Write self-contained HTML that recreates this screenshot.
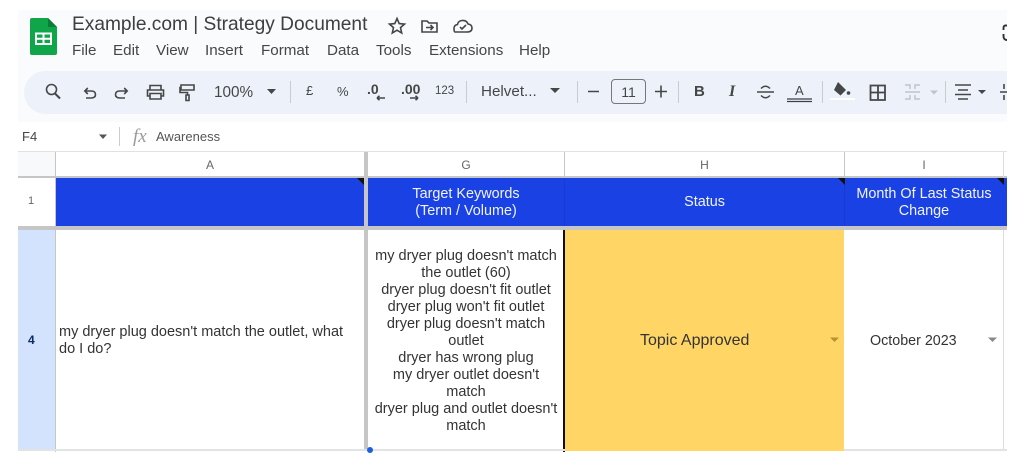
<!DOCTYPE html>
<html><head><meta charset="utf-8"><style>
html,body{margin:0;padding:0;background:#fff}
body{width:1024px;height:465px;position:relative;overflow:hidden;font-family:"Liberation Sans",sans-serif;color:#3c4043;filter:blur(.3px)}
div,svg{position:absolute}
.t{white-space:nowrap;line-height:1}
.c{text-align:center;white-space:nowrap}
.m{font-size:15.2px;top:43px;color:#444746}
.tb{font-size:13px;color:#444746}
.sep{width:1px;height:22px;top:81px;background:#c7ccd3}
.i{fill:none;stroke:#444746;stroke-width:1.6}
.hl{font-size:14.4px;line-height:17px;color:#f0f4ff}
.g{font-size:14.5px;line-height:17px;color:#333}
.ch{font-size:12px;color:#666;top:158px}
.tri{width:0;height:0;border-top:7px solid #111;border-left:7px solid transparent;top:178px}
</style></head><body>
<div style="left:18px;top:10px;width:989px;height:119px;background:#f9fbfd"></div>
<div style="left:24px;top:71px;width:983px;height:43px;background:#edf2fa;border-radius:22px 0 0 22px"></div>
<svg style="left:30px;top:18px" width="28" height="38" viewBox="0 0 28 38"><path d="M2 0H18L27 9V35Q27 37 25 37H2Q0 37 0 35V2Q0 0 2 0Z" fill="#0fa64a"/><path d="M18 0L27 9H18Z" fill="#0b7d38"/><path d="M6 15.500H21V26H6ZM13.500 15.500V26M6 20.700H21" fill="none" stroke="#fff" stroke-width="2"/></svg>
<div class="t" style="left:72px;top:15px;font-size:19.15px;color:#3c4043">Example.com | Strategy Document</div>
<svg style="left:387px;top:16px" width="90" height="20" viewBox="0 0 90 20"><path class="i" d="M10 2.500L12.200 7.600L17.500 8.100L13.500 11.600L14.700 17L10 14.200L5.300 17L6.500 11.600L2.500 8.100L7.800 7.600Z"/><path class="i" d="M35 5H40L42 7H50V16H35ZM39 11.500H46M43.500 9L46 11.500L43.500 14"/><path class="i" d="M68 16H80Q85 16 85 12Q85 8.500 81 8Q79.500 4 75 4.500Q71 5 70.500 8.500Q67 9 67 12.500Q67 16 68 16M73 11L75 13L79 9"/></svg>
<div class="t m" style="left:72px">File</div>
<div class="t m" style="left:113px">Edit</div>
<div class="t m" style="left:156px">View</div>
<div class="t m" style="left:205px">Insert</div>
<div class="t m" style="left:261px">Format</div>
<div class="t m" style="left:327px">Data</div>
<div class="t m" style="left:376px">Tools</div>
<div class="t m" style="left:429px">Extensions</div>
<div class="t m" style="left:519px">Help</div>
<svg style="left:0;top:71px" width="1007" height="43" viewBox="0 71 1007 43"><g class="i">
<circle cx="51.500" cy="89.500" r="5"/><path d="M55 93.500L60 98.500" stroke-width="2"/>
<path d="M85 91H91Q95.500 91 95.500 94.500Q95.500 98 91 98H86M87.800 88L84.800 91L87.800 94"/>
<path d="M127 91H120Q115.500 91 115.500 94.500Q115.500 98 120 98H125M124.200 88L127.200 91L124.200 94"/>
<path d="M150 90V85.500H161V90M150 96H147.500V90H163.500V96H161M150 93.500H161V99H150Z"/>
<path d="M181 85H194V90H181ZM181 87.500H180V92.500H187.500V95M186 95H189V100.500H186Z"/>
<path d="M377 98H385M377 98L379.500 95.800M377 98L379.500 100.200"/>
<path d="M410 98H418M418 98L415.500 95.800M418 98L415.500 100.200"/>
</g>
<path d="M267 89H276L271.500 94Z M550 88H560L555 93Z" fill="#444746"/>
<path d="M978 90H986L982 94Z" fill="#444746"/>
<g fill="none" stroke="#444746" stroke-width="1.600"><path d="M588 91.500H599M655 91.500H667M661 85.500V97.500"/></g>
<g fill="none" stroke="#444746" stroke-width="1.500"><path d="M757 92H774M761 88.500Q765.500 84 770 88.500M761 95.500Q765.500 100 770 95.500"/>
<path d="M870.500 85.500H885V100H870.500ZM878 85.500V100M870.500 92.500H885" stroke-width="1.800"/>
<path d="M955 85H971M958 90H968M955 94.500H971M958 99H968" stroke-width="1.600"/>
<path d="M1000 92H1007M1004 84V89M1004 95V100" stroke-width="1.600"/></g>
<g fill="none" stroke="#bfc4cb" stroke-width="1.500"><path d="M905 85H910V89M905 99H910V95M920 85H915V89M920 99H915V95M905 92H920"/></g>
<path d="M930 90.500H938L934 94.500Z" fill="#bfc4cb"/>
<path d="M838 82L846 90L840.500 95.500L834 90Z" fill="#444746"/><circle cx="848.500" cy="93" r="1.800" fill="#444746"/><path d="M830 99H855" stroke="#fff" stroke-width="2"/>
<path d="M787 99H812M787 101.500H812" stroke="#3c4043" stroke-width="1.300"/>
</svg>
<div class="t tb" style="left:214px;top:85px;font-size:15.300px">100%</div>
<div class="sep" style="left:290px"></div>
<div class="t tb" style="left:306px;top:84px;font-size:13px">£</div>
<div class="t tb" style="left:337px;top:85px;font-size:13px">%</div>
<div class="t tb" style="left:367px;top:82px;font-size:14px;font-weight:bold">.0</div>
<div class="t tb" style="left:401px;top:82px;font-size:14px;font-weight:bold">.00</div>
<div class="t tb" style="left:435px;top:86px;font-size:11.500px">123</div>
<div class="sep" style="left:466px"></div>
<div class="t tb" style="left:481px;top:84px;font-size:15.200px">Helvet...</div>
<div class="sep" style="left:577px"></div>
<div style="left:611px;top:79px;width:33px;height:23px;border:1px solid #777;border-radius:4px"></div>
<div class="c tb" style="left:611px;top:85px;width:35px;font-size:14px;line-height:14px">11</div>
<div class="sep" style="left:678px"></div>
<div class="t" style="left:694px;top:84px;font-size:15px;font-weight:bold;color:#444746">B</div>
<div class="t" style="left:729px;top:84px;font-size:16px;font-weight:bold;font-style:italic;font-family:'Liberation Serif',serif;color:#444746">I</div>
<div class="t" style="left:795px;top:84px;font-size:13px;color:#444746">A</div>
<div class="sep" style="left:822px"></div>
<div class="sep" style="left:945px"></div>
<svg style="left:1002px;top:23px" width="6" height="19" viewBox="0 0 6 19"><path d="M5 2.500H3.500Q1.500 2.500 1.500 5V7M1.500 11V13Q1.500 17 5 17" fill="none" stroke="#333" stroke-width="1.900"/></svg>

<div style="left:18px;top:122px;width:989px;height:30px;background:#fff"></div>
<div class="t" style="left:22px;top:130px;font-size:13px;color:#444">F4</div>
<svg style="left:98px;top:134px" width="10" height="6"><path d="M1 .5H9L5 5Z" fill="#555"/></svg>
<div style="left:119px;top:127px;width:1px;height:19px;background:#ccc"></div>
<div class="t" style="left:133px;top:127px;font-size:19px;font-style:italic;font-family:'Liberation Serif',serif;color:#9a9a9a">fx</div>
<div class="t" style="left:156px;top:130px;font-size:13px;color:#555">Awareness</div>

<div style="left:18px;top:151px;width:989px;height:1px;background:#e1e1e1"></div>
<div style="left:18px;top:152px;width:37px;height:25px;background:#f8f9fa"></div>
<div style="left:18px;top:176px;width:989px;height:2px;background:#c4c7c5"></div>
<div style="left:55px;top:152px;width:1px;height:300px;background:#c4c7c5"></div>
<div style="left:564px;top:152px;width:1px;height:25px;background:#c4c7c5"></div>
<div style="left:844px;top:152px;width:1px;height:25px;background:#c4c7c5"></div>
<div style="left:1003px;top:152px;width:1px;height:298px;background:#ddd"></div>
<div class="c ch" style="left:56px;width:308px">A</div>
<div class="c ch" style="left:368px;width:196px">G</div>
<div class="c ch" style="left:565px;width:279px">H</div>
<div class="c ch" style="left:845px;width:158px">I</div>
<div class="t" style="left:28px;top:196px;font-size:11px;color:#666">1</div>

<div style="left:56px;top:178px;width:951px;height:49px;background:#1a41e3"></div>
<div style="left:564px;top:178px;width:1px;height:49px;background:#1b3ccb"></div>
<div style="left:844px;top:178px;width:1px;height:49px;background:#1b3ccb"></div>
<div style="left:18px;top:226px;width:989px;height:4px;background:#c6c6c6"></div>
<div style="left:364px;top:152px;width:4px;height:298px;background:#c6c6c6"></div>
<div class="tri" style="left:357px"></div>
<div class="tri" style="left:838px"></div>
<div class="tri" style="left:997px"></div>
<div class="c hl" style="left:368px;top:186px;width:196px">Target Keywords<br>(Term / Volume)</div>
<div class="c hl" style="left:565px;top:194px;width:279px">Status</div>
<div class="c hl" style="left:845px;top:186px;width:158px">Month Of Last Status<br>Change</div>

<div style="left:18px;top:230px;width:37px;height:219px;background:#d3e3fd"></div>
<div class="t" style="left:28px;top:334px;font-size:12px;font-weight:bold;color:#0b2a66">4</div>
<div class="g" style="left:59px;top:324px;white-space:nowrap">my dryer plug doesn't match the outlet, what<br>do I do?</div>
<div class="c g" style="left:368px;top:248px;width:196px">my dryer plug doesn't match<br>the outlet (60)<br>dryer plug doesn't fit outlet<br>dryer plug won't fit outlet<br>dryer plug doesn't match<br>outlet<br>dryer has wrong plug<br>my dryer outlet doesn't<br>match<br>dryer plug and outlet doesn't<br>match</div>
<div style="left:565px;top:230px;width:279px;height:221px;background:#ffd666"></div>
<div style="left:563px;top:230px;width:2px;height:222px;background:#111"></div>
<div class="t" style="left:640px;top:333px;font-size:16px;color:#333">Topic Approved</div>
<svg style="left:829.500px;top:337px" width="10" height="6"><path d="M0 0.500H9L4.500 5Z" fill="#b99032"/></svg>
<div class="t" style="left:870px;top:334px;font-size:14.300px;color:#333">October 2023</div>
<svg style="left:987.500px;top:337px" width="10" height="6"><path d="M0 0.500H9L4.500 5Z" fill="#888"/></svg>
<div style="left:18px;top:449px;width:547px;height:2px;background:#e2e3e3"></div>
<div style="left:844px;top:449px;width:163px;height:2px;background:#e2e3e3"></div>
<div style="left:367px;top:447px;width:6px;height:6px;border-radius:50%;background:#1a5fe3"></div>
</body></html>
